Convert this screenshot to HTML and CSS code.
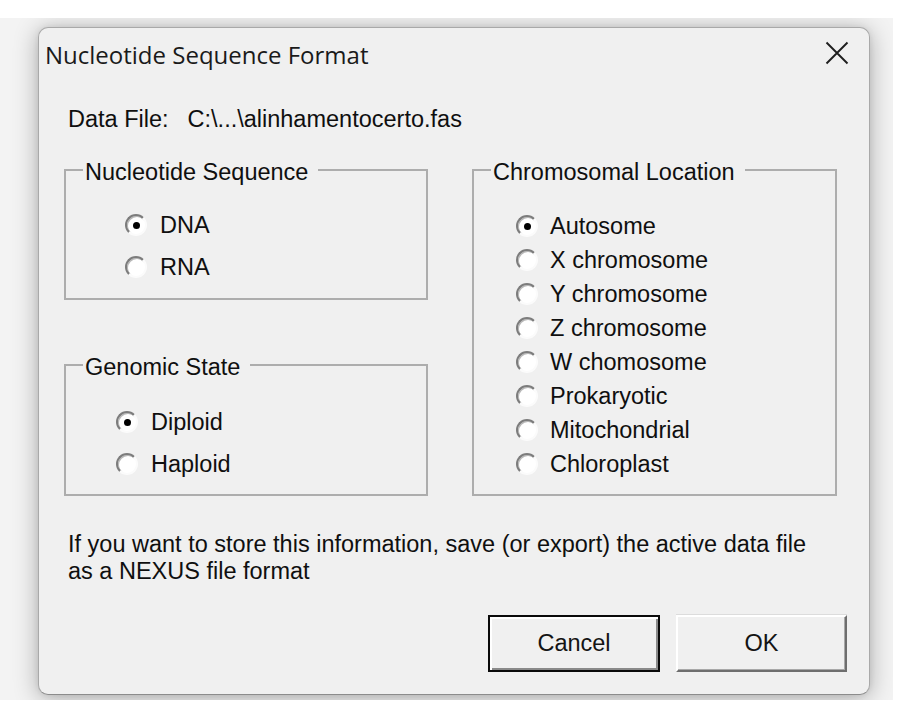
FILE: index.html
```html
<!DOCTYPE html>
<html>
<head>
<meta charset="utf-8">
<title>Nucleotide Sequence Format</title>
<link rel="stylesheet" href="styles.css">
</head>
<body>
<div class="frame">
  <div class="dialog">
    <div class="titlebar">
      <span class="title">Nucleotide Sequence Format</span>
      <svg class="close" width="24" height="24" viewBox="0 0 24 24"><path d="M1.5 1.5 L22.5 22.5 M22.5 1.5 L1.5 22.5" stroke="#1e1e1e" stroke-width="1.9" fill="none"/></svg>
    </div>
    <div class="content">
      <p class="datafile"><span>Data File:</span><span class="path">C:\...\alinhamentocerto.fas</span></p>
      <div class="groups">
        <div class="col">
          <fieldset class="box">
            <legend>Nucleotide Sequence</legend>
            <div class="opts opts-nuc">
              <div class="opt"><span class="radio checked"></span>DNA</div>
              <div class="opt"><span class="radio"></span>RNA</div>
            </div>
          </fieldset>
          <fieldset class="box">
            <legend>Genomic State</legend>
            <div class="opts opts-gen">
              <div class="opt"><span class="radio checked"></span>Diploid</div>
              <div class="opt"><span class="radio"></span>Haploid</div>
            </div>
          </fieldset>
        </div>
        <fieldset class="box">
          <legend>Chromosomal Location</legend>
          <div class="opts opts-chr">
            <div class="opt"><span class="radio checked"></span>Autosome</div>
            <div class="opt"><span class="radio"></span>X chromosome</div>
            <div class="opt"><span class="radio"></span>Y chromosome</div>
            <div class="opt"><span class="radio"></span>Z chromosome</div>
            <div class="opt"><span class="radio"></span>W chomosome</div>
            <div class="opt"><span class="radio"></span>Prokaryotic</div>
            <div class="opt"><span class="radio"></span>Mitochondrial</div>
            <div class="opt"><span class="radio"></span>Chloroplast</div>
          </div>
        </fieldset>
      </div>
      <p class="note">If you want to store this information, save (or export) the active data file<br>as a NEXUS file format</p>
      <div class="buttons">
        <button class="btn btn-default">Cancel</button>
        <button class="btn btn-ok">OK</button>
      </div>
    </div>
  </div>
</div>
</body>
</html>
```
FILE: styles.css
```css
html, body {
  margin: 0;
  padding: 0;
  background: #ffffff;
}

.frame {
  margin-top: 18px;
  width: 893px;
  height: 682px;
  overflow: hidden;
  padding-top: 9px;
  padding-left: 38px;
  box-sizing: border-box;
  background: #f3f3f3;
}

.dialog {
  width: 832px;
  height: 668px;
  box-sizing: border-box;
  background: #f0f0f0;
  border: 1px solid #a9a9a9;
  border-bottom-color: #8c8c8c;
  border-radius: 10px;
  box-shadow: 0 3px 24px rgba(0, 0, 0, 0.3), 0 0 6px rgba(0, 0, 0, 0.08);
  font-family: "Liberation Sans", Arial, sans-serif;
  font-size: 23.5px;
  color: #0f0f0f;
}

.titlebar {
  height: 52px;
  display: flex;
  align-items: center;
  justify-content: space-between;
  padding-left: 6px;
  padding-right: 20px;
}

.title {
  font-family: "Open Sans", "Liberation Sans", sans-serif;
  font-size: 24px;
  color: #1a1a1a;
}

.close {
  display: block;
  margin-top: -2px;
}

.content {
  padding: 26px 22px 0 25px;
}

.datafile {
  margin: 0;
  padding-left: 4px;
  line-height: 27px;
}

.path {
  margin-left: 19px;
}

.groups {
  margin-top: 20px;
  display: grid;
  grid-template-columns: 364px 365px;
  column-gap: 44px;
}

.col {
  display: flex;
  flex-direction: column;
  gap: 48px;
}

.box {
  margin: 0;
  padding: 0;
  min-width: 0;
  border: 2px solid #adadad;
}

.box legend {
  margin-left: 17px;
  padding: 6px 10px 0 2px;
  line-height: 27px;
}

.opts {
  display: flex;
  flex-direction: column;
}

.opts-nuc {
  padding: 18px 0 10px 59px;
}

.opts-gen {
  padding: 20px 0 9px 50px;
}

.opts-chr {
  padding: 23px 0 13px 42px;
}

.opt {
  display: flex;
  align-items: center;
  line-height: 27px;
}

.opts-nuc .opt,
.opts-gen .opt {
  height: 42px;
}

.opts-chr .opt {
  height: 34px;
}

.radio {
  width: 22px;
  height: 22px;
  box-sizing: border-box;
  border-radius: 50%;
  border: 2px solid;
  border-color: #7c7c7c #fbfbfb #fbfbfb #7c7c7c;
  background: #ffffff;
  box-shadow: inset 1px 1px 0 #b8b8b8;
  display: flex;
  align-items: center;
  justify-content: center;
  margin-right: 13px;
  flex: none;
}

.opts-chr .radio {
  margin-right: 12px;
}

.radio.checked::after {
  content: "";
  width: 7px;
  height: 7px;
  border-radius: 50%;
  background: #000000;
}

.note {
  margin: 35px 0 0;
  padding-left: 4px;
  line-height: 27px;
}

.buttons {
  margin-top: 30px;
  display: flex;
  justify-content: flex-end;
  gap: 16px;
}

.btn {
  height: 57px;
  margin: 0;
  padding: 0;
  background: #f0f0f0;
  font-family: "Liberation Sans", Arial, sans-serif;
  font-size: 23.5px;
  color: #141414;
  box-sizing: border-box;
}

.btn-default {
  width: 172px;
  border: 2px solid #0a0a0a;
  box-shadow: inset 2px 2px 0 #ffffff, inset -2px -2px 0 #8a8a8a;
}

.btn-ok {
  width: 171px;
  border: 2px solid;
  border-color: #ffffff #6e6e6e #6e6e6e #ffffff;
  box-shadow: inset -1px -1px 0 #a8a8a8, 0 -1px 0 #dcdcdc;
}
```
